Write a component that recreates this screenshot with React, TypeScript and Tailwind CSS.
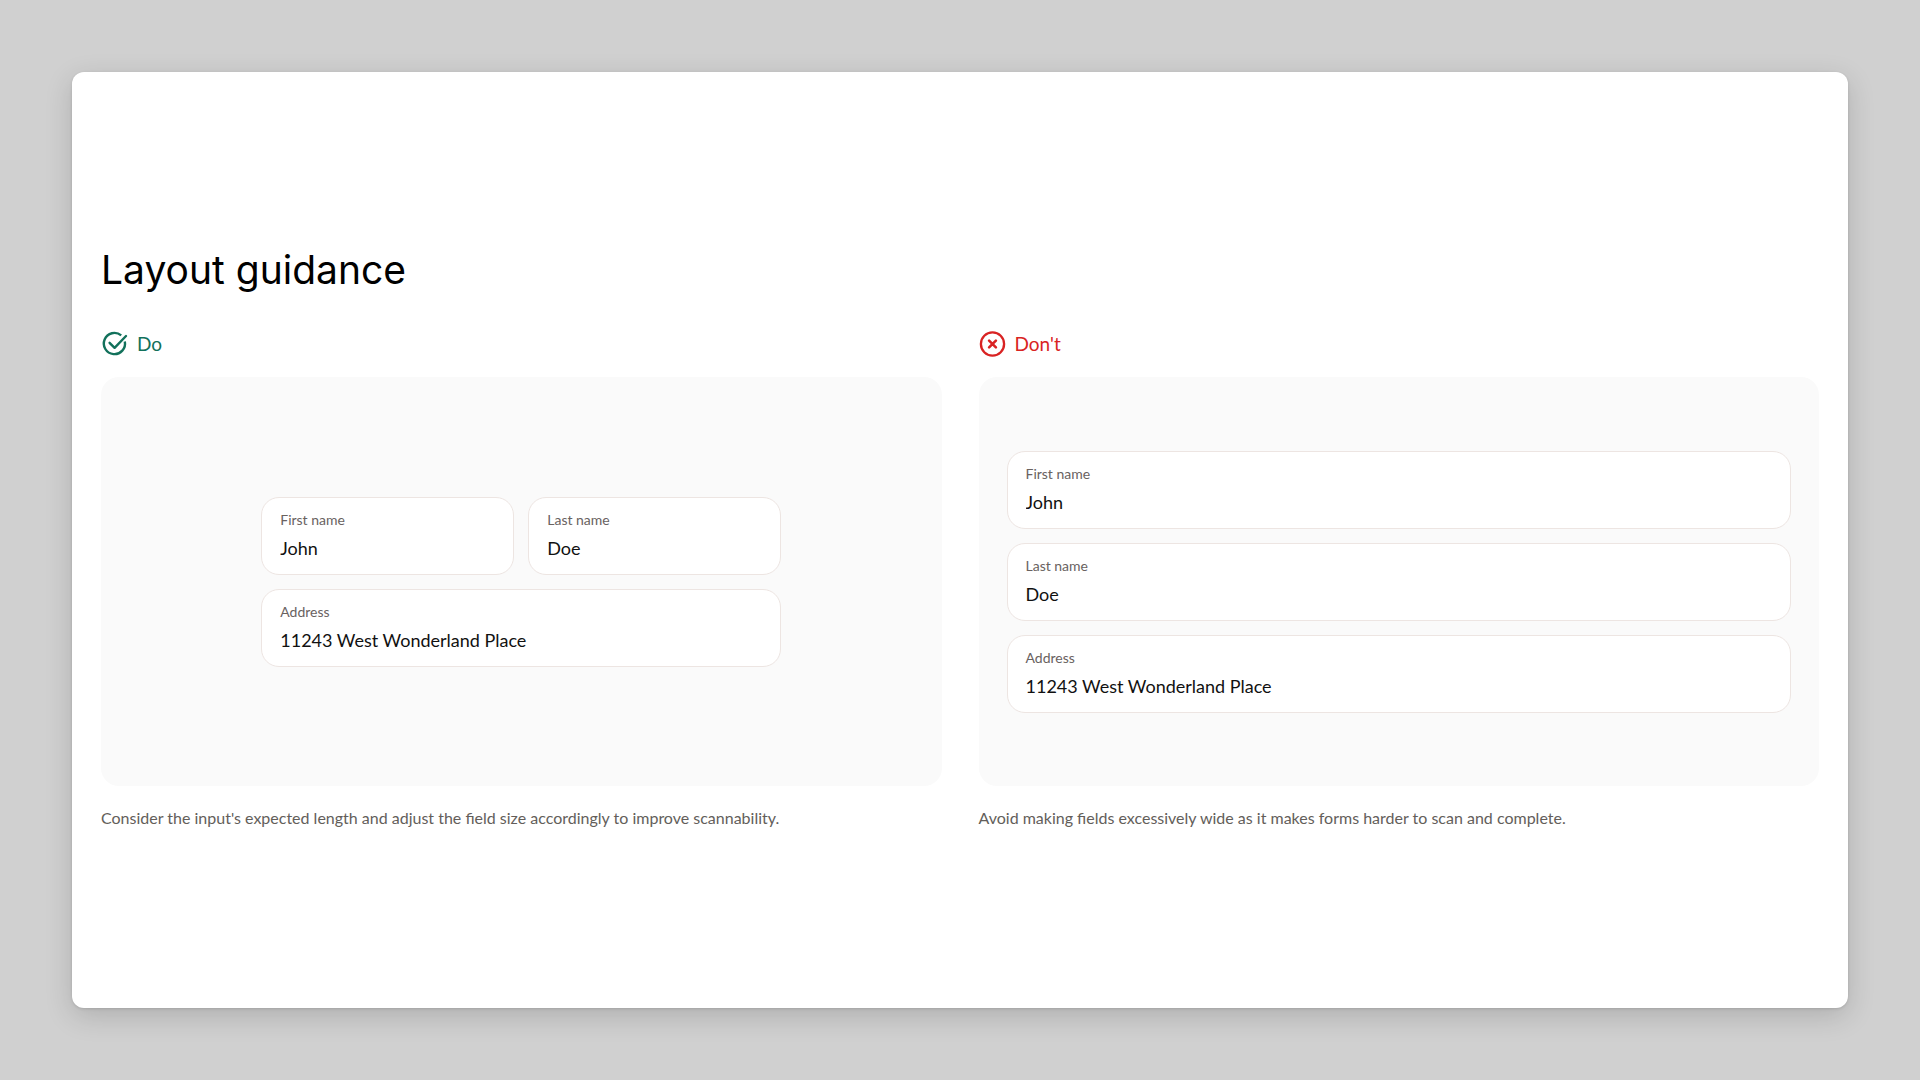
import { useId } from 'react'

type FieldProps = {
  label: string
  value: string
  className?: string
}

type ExampleProps = {
  kind: 'do' | 'dont'
  caption: string
  children: React.ReactNode
}

export default function App() {
  return (
    <main className="min-h-screen bg-[#d0d0d0] p-[72px] flex font-['Lato',sans-serif]">
      <section
        aria-labelledby="layout-guidance"
        className="flex-1 min-w-0 flex flex-col justify-center bg-white rounded-xl px-[29px] pb-1 shadow-[0_1px_3px_rgba(0,0,0,0.12),0_8px_28px_rgba(0,0,0,0.16)]"
      >
        <h1 id="layout-guidance" className="font-['Inter',sans-serif] text-[39px] leading-[48px] text-black">
          Layout guidance
        </h1>

        <div className="mt-9 grid grid-cols-2 gap-[37px]">
          <Example
            kind="do"
            caption="Consider the input's expected length and adjust the field size accordingly to improve scannability."
          >
            <div className="w-full max-w-[520px] grid grid-cols-2 gap-[14px]">
              <Field label="First name" value="John" />
              <Field label="Last name" value="Doe" />
              <Field label="Address" value="11243 West Wonderland Place" className="col-span-2" />
            </div>
          </Example>

          <Example
            kind="dont"
            caption="Avoid making fields excessively wide as it makes forms harder to scan and complete."
          >
            <div className="w-full grid gap-[14px]">
              <Field label="First name" value="John" />
              <Field label="Last name" value="Doe" />
              <Field label="Address" value="11243 West Wonderland Place" />
            </div>
          </Example>
        </div>
      </section>
    </main>
  )
}

function Example({ kind, caption, children }: ExampleProps) {
  const isDo = kind === 'do'
  return (
    <article>
      <h2 className={`flex items-center gap-2 text-[19px] leading-7 ${isDo ? 'text-[#12715b]' : 'text-[#d92323]'}`}>
        {isDo ? <CheckIcon /> : <CrossIcon />}
        {isDo ? 'Do' : "Don't"}
      </h2>
      <div className="mt-[19px] min-h-[409px] flex items-center justify-center rounded-[18px] bg-[#fafafa] px-7 py-8">
        {children}
      </div>
      <p className="mt-5 text-base leading-6 text-[#635e5a]">{caption}</p>
    </article>
  )
}

function Field({ label, value, className = '' }: FieldProps) {
  const id = useId()
  return (
    <div className={`min-w-0 flex flex-col rounded-[18px] border border-[#ede5e2] bg-white px-[18px] py-3 ${className}`}>
      <label htmlFor={id} className="text-sm leading-5 text-[#69625f]">
        {label}
      </label>
      <input
        id={id}
        type="text"
        defaultValue={value}
        className="mt-1 w-full bg-transparent text-lg leading-7 h-7 text-[#111] outline-none"
      />
    </div>
  )
}

function CheckIcon() {
  return (
    <svg className="w-7 h-7" viewBox="0 0 28 28" fill="none" stroke="currentColor" strokeWidth="2.4" aria-hidden="true">
      <path d="M20.2 5.4A10.6 10.6 0 1 0 23.8 11.4" />
      <path strokeLinecap="round" strokeLinejoin="round" d="M8.6 12.8l5 5L25 6" />
    </svg>
  )
}

function CrossIcon() {
  return (
    <svg className="w-7 h-7" viewBox="0 0 28 28" fill="none" stroke="currentColor" strokeWidth="2.3" aria-hidden="true">
      <circle cx="13.5" cy="14" r="11.6" />
      <path strokeLinecap="round" strokeWidth="2.6" d="M10.1 10.6l6.8 6.8M16.9 10.6l-6.8 6.8" />
    </svg>
  )
}
